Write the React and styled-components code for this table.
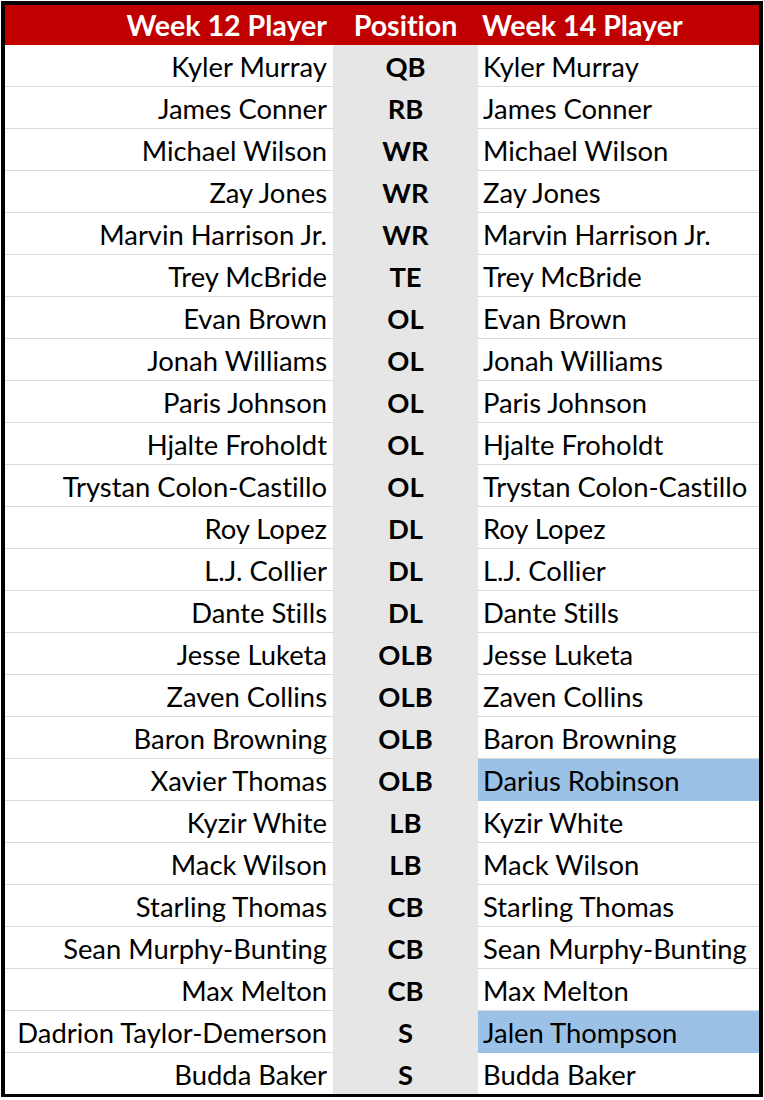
import React from "react";
import styled, { createGlobalStyle } from "styled-components";

const GlobalStyle = createGlobalStyle`
  html, body { margin: 0; padding: 0; background: #ffffff; }
  body {
    font-family: Lato, "Noto Sans", sans-serif;
    color: #000;
    font-variant-ligatures: none;
  }
`;

const Sheet = styled.div`
  margin: 1px 0 0 1px;
  width: 762px;
  box-sizing: border-box;
  border: 4px solid #000;
  background: #fff;
`;

const HeaderRow = styled.div`
  display: grid;
  grid-template-columns: 328px 145px 1fr;
  height: 40px;
  background: #c00000;
  color: #fff;
  font-weight: 700;
  font-size: 28.6px;
  line-height: 39px;
  padding-top: 1px;
  box-sizing: border-box;
  white-space: nowrap;
`;

const HeadCell = styled.div`
  text-align: ${(p) => p.$align};
  padding: ${(p) =>
    p.$align === "right" ? "0 6px 0 0" : p.$align === "left" ? "0 0 0 4px" : "0"};
`;

const Row = styled.div`
  display: grid;
  grid-template-columns: 328px 145px 1fr;
  height: 42px;
  font-size: 27.4px;
  white-space: nowrap;
  &:last-child {
    height: 40px;
  }
`;

const NameCell = styled.div`
  box-sizing: border-box;
  height: 100%;
  padding: 3px ${(p) => (p.$align === "right" ? "6px" : "0")} 0
    ${(p) => (p.$align === "left" ? "5px" : "0")};
  text-align: ${(p) => p.$align};
  line-height: 38px;
  border-bottom: 1px solid ${(p) => (p.$changed ? "#9bc2e6" : "#d9d9d9")};
  background: ${(p) => (p.$changed ? "#9bc2e6" : "#fff")};
  ${Row}:last-child & {
    border-bottom: none;
  }
`;

const PosCell = styled.div`
  box-sizing: border-box;
  height: 100%;
  padding-top: 3px;
  text-align: center;
  line-height: 38px;
  font-weight: 700;
  background: #e7e6e6;
`;

const roster = [
  ["Kyler Murray", "QB", "Kyler Murray"],
  ["James Conner", "RB", "James Conner"],
  ["Michael Wilson", "WR", "Michael Wilson"],
  ["Zay Jones", "WR", "Zay Jones"],
  ["Marvin Harrison Jr.", "WR", "Marvin Harrison Jr."],
  ["Trey McBride", "TE", "Trey McBride"],
  ["Evan Brown", "OL", "Evan Brown"],
  ["Jonah Williams", "OL", "Jonah Williams"],
  ["Paris Johnson", "OL", "Paris Johnson"],
  ["Hjalte Froholdt", "OL", "Hjalte Froholdt"],
  ["Trystan Colon-Castillo", "OL", "Trystan Colon-Castillo"],
  ["Roy Lopez", "DL", "Roy Lopez"],
  ["L.J. Collier", "DL", "L.J. Collier"],
  ["Dante Stills", "DL", "Dante Stills"],
  ["Jesse Luketa", "OLB", "Jesse Luketa"],
  ["Zaven Collins", "OLB", "Zaven Collins"],
  ["Baron Browning", "OLB", "Baron Browning"],
  ["Xavier Thomas", "OLB", "Darius Robinson"],
  ["Kyzir White", "LB", "Kyzir White"],
  ["Mack Wilson", "LB", "Mack Wilson"],
  ["Starling Thomas", "CB", "Starling Thomas"],
  ["Sean Murphy-Bunting", "CB", "Sean Murphy-Bunting"],
  ["Max Melton", "CB", "Max Melton"],
  ["Dadrion Taylor-Demerson", "S", "Jalen Thompson"],
  ["Budda Baker", "S", "Budda Baker"],
];

export default function App() {
  return (
    <>
      <GlobalStyle />
      <Sheet>
        <HeaderRow>
          <HeadCell $align="right">Week 12 Player</HeadCell>
          <HeadCell $align="center">Position</HeadCell>
          <HeadCell $align="left">Week 14 Player</HeadCell>
        </HeaderRow>
        {roster.map(([before, pos, after], i) => (
          <Row key={i}>
            <NameCell $align="right">{before}</NameCell>
            <PosCell>{pos}</PosCell>
            <NameCell $align="left" $changed={before !== after}>
              {after}
            </NameCell>
          </Row>
        ))}
      </Sheet>
    </>
  );
}
